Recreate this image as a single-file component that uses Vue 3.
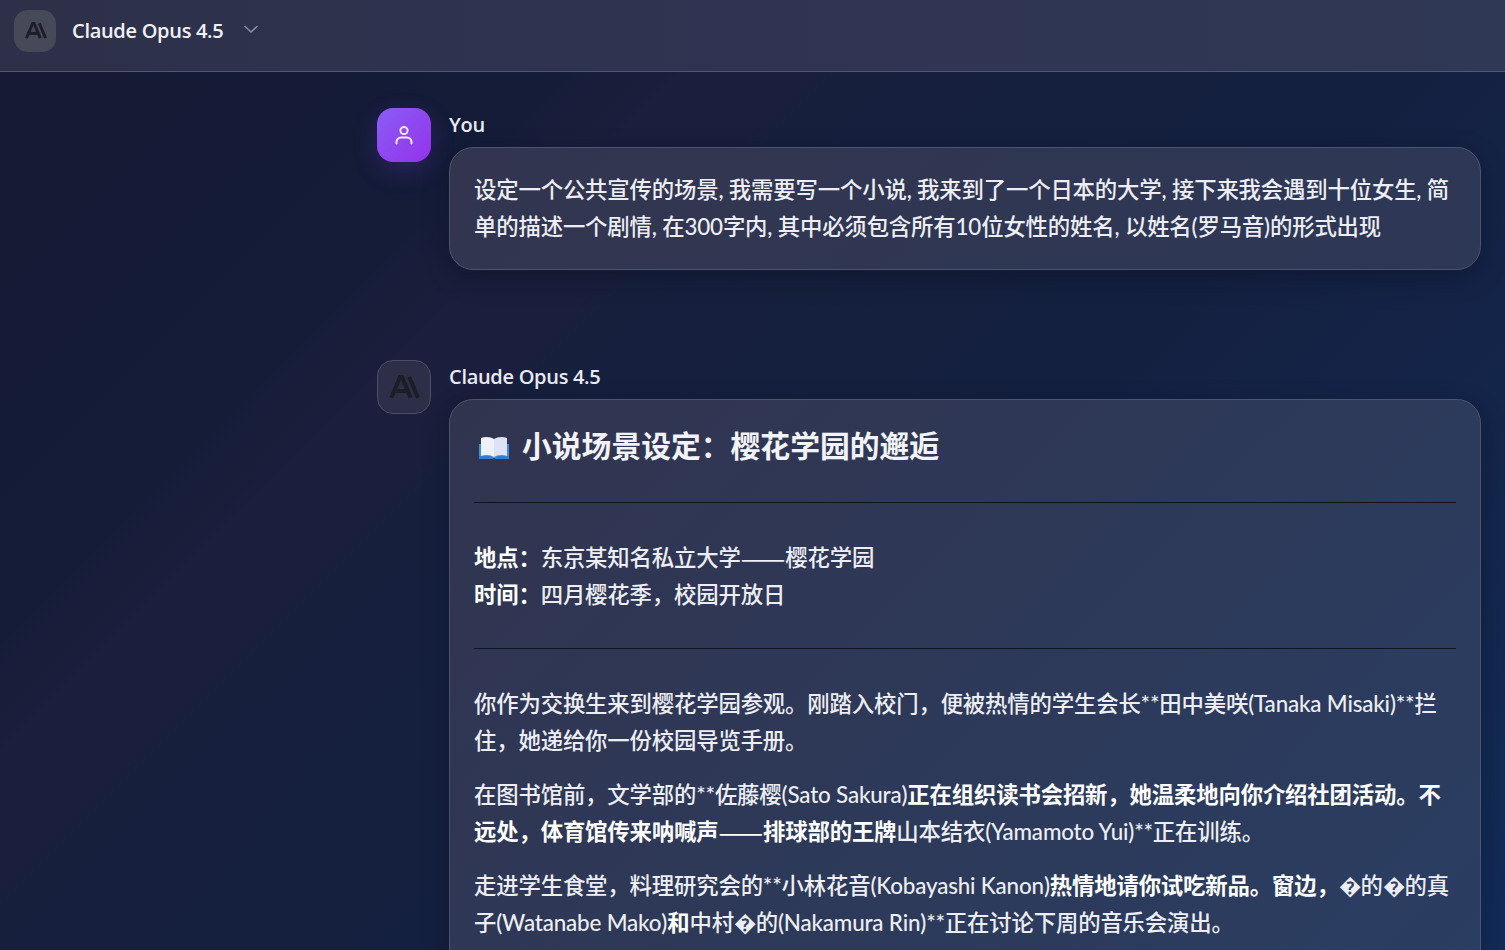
<template>
  <div class="page">
    <header class="top-bar">
      <div class="model-logo">
        <svg viewBox="0 0 24 24" width="23" height="23" fill="none" stroke="#1c1d26" stroke-width="3">
          <path d="M2.5 20 L9 4.5 H10.5 L17 20" />
          <path d="M5 15 H14.5" />
          <path d="M16 4.5 L22.5 20" />
        </svg>
      </div>
      <span class="model-name">Claude Opus 4.5</span>
      <svg class="chevron" viewBox="0 0 16 16" width="16" height="16" fill="none" stroke="#8b8fa6" stroke-width="1.6">
        <path d="M1.5 5 L8 11 L14.5 5" />
      </svg>
    </header>

    <main class="chat">
      <section class="message user-message">
        <div class="avatar avatar-user">
          <svg viewBox="0 0 24 24" width="24" height="24" fill="none" stroke="#f3e8ff" stroke-width="2" stroke-linecap="round">
            <circle cx="12" cy="7.5" r="3.6" />
            <path d="M4.5 20.5 V19 a4.5 4.5 0 0 1 4.5 -4.5 h6 a4.5 4.5 0 0 1 4.5 4.5 v1.5" />
          </svg>
        </div>
        <div class="message-body">
          <div class="sender">You</div>
          <div class="bubble">
            <p>设定一个公共宣传的场景, 我需要写一个小说, 我来到了一个日本的大学, 接下来我会遇到十位女生, 简单的描述一个剧情, 在300字内, 其中必须包含所有10位女性的姓名, 以姓名(罗马音)的形式出现</p>
          </div>
        </div>
      </section>

      <section class="message">
        <div class="avatar avatar-model">
          <svg viewBox="0 0 24 24" width="32" height="32" fill="none" stroke="#1c1d26" stroke-width="3">
            <path d="M2.5 20 L9 4.5 H10.5 L17 20" />
            <path d="M5 15 H14.5" />
            <path d="M16 4.5 L22.5 20" />
          </svg>
        </div>
        <div class="message-body">
          <div class="sender">Claude Opus 4.5</div>
          <div class="bubble reply">
            <h2>
              <svg class="book" viewBox="0 0 30 24" width="30" height="24">
                <path d="M0 8 H30 V22 H0 Z" fill="#3f8fe0" />
                <path d="M2 2 C7 0 12 1 15 3 V21 C12 19 7 18 2 20 Z" fill="#eef1f8" />
                <path d="M28 2 C23 0 18 1 15 3 V21 C18 19 23 18 28 20 Z" fill="#dde2f4" />
                <path d="M0 20 H12 L15 23.500 L18 20 H30 V23 H0 Z" fill="#2f7fd8" />
              </svg>
              小说场景设定：樱花学园的邂逅
            </h2>
            <hr />
            <p><strong>地点：</strong>东京某知名私立大学<span class="dash">——</span>樱花学园<br /><strong>时间：</strong>四月樱花季，校园开放日</p>
            <hr />
            <p>你作为交换生来到樱花学园参观。刚踏入校门，便被热情的学生会长**田中美咲(Tanaka Misaki)**拦住，她递给你一份校园导览手册。</p>
            <p>在图书馆前，文学部的**佐藤樱(Sato Sakura)<strong>正在组织读书会招新，她温柔地向你介绍社团活动。不远处，体育馆传来呐喊声<span class="dash">——</span>排球部的王牌</strong>山本结衣(Yamamoto Yui)**正在训练。</p>
            <p>走进学生食堂，料理研究会的**小林花音(Kobayashi Kanon)<strong>热情地请你试吃新品。窗边，</strong>�的�的真子(Watanabe Mako)<strong>和</strong>中村�的(Nakamura Rin)**正在讨论下周的音乐会演出。</p>
          </div>
        </div>
      </section>
    </main>
  </div>
</template>

<script setup>
// static screenshot, no state needed
</script>

<style>
html, body {
  margin: 0;
  background: #141a36;
}
</style>

<style scoped>
.page {
  width: 1505px;
  height: 950px;
  overflow: hidden;
  display: flex;
  flex-direction: column;
  font-family: "Open Sans", "Noto Sans CJK SC", sans-serif;
  color: #e8eaf2;
  background: linear-gradient(135deg, #161933 0%, #141c38 25%, #1b1e3c 31%, #1b1e3c 36%, #16203d 37%, #142040 60%, #14264c 80%, #122c58 100%);
}

.top-bar {
  flex: none;
  display: flex;
  align-items: center;
  padding: 0 14px 10px;
  box-sizing: border-box;
  height: 72px;
  background: linear-gradient(90deg, #2e3049 0%, #2f3452 50%, #2f3855 100%);
  border-bottom: 1px solid #4f5876;
}

.model-logo {
  width: 42px;
  height: 42px;
  border-radius: 14px;
  background: #464958;
  display: flex;
  align-items: center;
  justify-content: center;
}

.model-name {
  margin-left: 16px;
  font-size: 20px;
  font-weight: 600;
  letter-spacing: -0.3px;
  color: #f0f1f6;
}

.chevron {
  margin-left: 20px;
  margin-bottom: 4px;
}

.chat {
  flex: 1;
  padding: 36px 24px 0 377px;
  display: flex;
  flex-direction: column;
  gap: 90px;
}

.message {
  display: flex;
  gap: 18px;
}

.avatar {
  flex: none;
  width: 54px;
  height: 54px;
  border-radius: 16px;
  box-sizing: border-box;
  display: flex;
  align-items: center;
  justify-content: center;
}

.avatar-user {
  background: linear-gradient(135deg, #8b5cf6, #9333ea);
  box-shadow: 0 8px 24px rgba(124, 58, 237, 0.22);
}

.avatar-model {
  background: #2c2f47;
  border: 1px solid #4a4d64;
}

.message-body {
  flex: 1;
  min-width: 0;
}

.sender {
  height: 34px;
  padding-top: 2px;
  box-sizing: border-box;
  font-size: 20px;
  line-height: 30px;
  font-weight: 600;
  letter-spacing: -0.3px;
  color: #e8eaf2;
}

.bubble {
  margin-top: 5px;
  padding: 24px 24px 23px;
  border-radius: 24px;
  border: 1px solid #4c5570;
  background: linear-gradient(135deg, #33354f, #2d3856);
  box-shadow: 0 8px 24px rgba(8, 12, 30, 0.35);
  font-family: "Lato", "Noto Sans CJK SC", sans-serif;
  font-size: 22.4px;
  font-weight: 500;
  line-height: 1.65;
  letter-spacing: -0.17px;
  color: #eceef4;
}

.reply {
  background: linear-gradient(135deg, #31344f 0%, #2a3e62 100%);
  padding-top: 22px;
}

.dash {
  font-family: "Noto Sans CJK SC", sans-serif;
  font-size: 26.6px;
  font-weight: 400;
  line-height: 0;
  letter-spacing: 0;
  vertical-align: -1.5px;
}

.bubble p {
  margin: 0 0 17px;
}

.user-message .bubble p {
  margin: 0;
}

.reply strong {
  font-weight: 700;
  color: #fff;
}

h2 {
  margin: 0;
  display: flex;
  align-items: center;
  gap: 13px;
  font-size: 29.8px;
  line-height: 48px;
  font-weight: 700;
  letter-spacing: 0;
  color: #f2f3f8;
}

.book {
  margin: 4px 0 0 5px;
}

hr {
  border: none;
  border-top: 1px solid #0f1322;
  margin: 32px 0 37px;
}

p + hr {
  margin: 34px 0 37px;
}
</style>
